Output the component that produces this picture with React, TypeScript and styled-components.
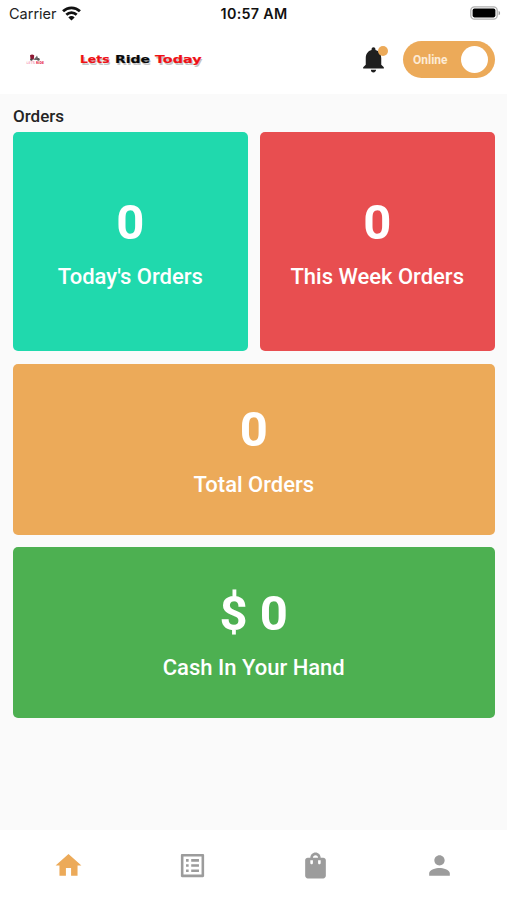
import React from "react";
import styled, { createGlobalStyle } from "styled-components";
import { MdHome, MdListAlt, MdNotifications, MdPerson, MdShoppingBag } from "react-icons/md";

const GlobalStyle = createGlobalStyle`
  * { box-sizing: border-box; }
  body { margin: 0; background: #fafafa; font-family: Roboto, sans-serif; }
`;

const Screen = styled.div`
  width: 507px;
  height: 900px;
  display: flex;
  flex-direction: column;
  background: #fafafa;
  overflow: hidden;
`;

const StatusBar = styled.div`
  height: 27px;
  flex: none;
  display: grid;
  grid-template-columns: 1fr auto 1fr;
  align-items: center;
  padding: 0 8px 0 9px;
  background: #fff;
  color: #111;
  font-family: Inter, sans-serif;
  font-size: 14.5px;
  line-height: 27px;
`;

const Carrier = styled.div`
  display: flex;
  align-items: center;
  gap: 5px;
  color: #222;
`;

const Clock = styled.div`
  font-weight: 600;
  font-size: 14.3px;
  letter-spacing: 0.3px;
`;

const BatterySlot = styled.div`
  display: flex;
  justify-content: flex-end;
  margin-right: -2px;
  padding-bottom: 1px;
`;

const Header = styled.header`
  height: 67px;
  flex: none;
  display: flex;
  align-items: center;
  padding: 0 12px 2px 26px;
  background: #fff;
`;

const Wordmark = styled.svg`
  margin-left: 33px;
`;

const Bell = styled.div`
  position: relative;
  display: flex;
  margin-left: auto;
  margin-right: 14px;
  color: #1f1f1f;
`;

const BellDot = styled.span`
  position: absolute;
  top: 1.5px;
  right: 1.5px;
  width: 10px;
  height: 10px;
  border-radius: 50%;
  background: #ecaa59;
`;

const Toggle = styled.button`
  display: flex;
  align-items: center;
  justify-content: space-between;
  width: 92px;
  height: 37px;
  padding: 0 7px 0 10px;
  border: 0;
  border-radius: 19px;
  background: #ecaa59;
  color: #fdebd5;
  font: 700 12px Roboto, sans-serif;
`;

const Knob = styled.span`
  width: 27px;
  height: 27px;
  border-radius: 50%;
  background: #fff;
`;

const Content = styled.main`
  flex: 1;
  padding: 12px 12.5px 0 13px;
`;

const Title = styled.h1`
  margin: 0 0 5.5px;
  font-size: 17px;
  line-height: 20px;
  font-weight: 500;
  color: #242424;
`;

const Cards = styled.div`
  display: grid;
  grid-template-columns: 1fr 1fr;
  grid-template-rows: 219.8px 171px 171px;
  gap: 12.3px;
`;

const Card = styled.section<{ $color: string; $wide?: boolean }>`
  grid-column: ${(p) => (p.$wide ? "1 / -1" : "auto")};
  display: flex;
  flex-direction: column;
  align-items: center;
  justify-content: center;
  padding-top: 1.2px;
  border-radius: 5px;
  background: ${(p) => p.$color};
  color: #fff;
`;

const Value = styled.div`
  font-size: 49px;
  line-height: 58px;
  font-weight: 700;
`;

const Label = styled.div`
  margin-top: 12.4px;
  font-size: 22px;
  line-height: 26px;
  font-weight: 500;
  white-space: nowrap;
`;

const Nav = styled.nav`
  height: 70px;
  flex: none;
  display: grid;
  grid-template-columns: repeat(4, 1fr);
  padding: 0 6px 0 7px;
  background: #fff;
`;

const Tab = styled.div<{ $active?: boolean }>`
  display: flex;
  align-items: center;
  justify-content: center;
  color: ${(p) => (p.$active ? "#ecaa59" : "#9c9c9c")};
`;

const cards = [
  { value: "0", label: "Today's Orders", color: "#20d9ad" },
  { value: "0", label: "This Week Orders", color: "#e84e50" },
  { value: "0", label: "Total Orders", color: "#ecaa59", wide: true },
  { value: "$ 0", label: "Cash In Your Hand", color: "#4db051", wide: true },
];

const tabs = [MdHome, MdListAlt, MdShoppingBag, MdPerson];

const Wifi = () => (
  <svg width="19" height="15" viewBox="0 0 18 14" fill="none" stroke="#111" strokeWidth="2.6">
    <path d="M1 4.9a11.5 11.5 0 0 1 16 0" />
    <path d="M4.1 8.2a7 7 0 0 1 9.8 0" />
    <path d="M9 13.6 6 10.7a4.3 4.3 0 0 1 6 0z" fill="#111" stroke="none" />
  </svg>
);

const Battery = () => (
  <svg width="31" height="14" viewBox="0 0 31 14">
    <rect x="0.8" y="0.8" width="26.4" height="12.4" rx="3.6" fill="#fff" stroke="#b0b0b0" strokeWidth="1.3" />
    <rect x="2.6" y="2.6" width="22.8" height="8.8" rx="1.8" fill="#000" />
    <path d="M28.6 4.7a2.5 2.5 0 0 1 0 4.6z" fill="#999" />
  </svg>
);

const ScooterLogo = () => (
  <svg width="20" height="14" viewBox="0 0 20 14">
    <path d="M4 2.2Q6 0.6 8.2 2.2L7.8 6.4H4.6z" fill="#8d1732" />
    <path d="M7.5 6.5 10 4l1-1.6 1 2.8 1.5 1.8H9z" fill="#686868" />
    <circle cx="5.4" cy="6.6" r="1.2" fill="#444" />
    <circle cx="12.4" cy="6.4" r="1.3" fill="#555" />
    <text x="0.5" y="11" fontFamily="DejaVu Sans" fontSize="3.6" fill="#f0608c" textLength="8.5" lengthAdjust="spacingAndGlyphs">LETS</text>
    <text x="10" y="11" fontFamily="DejaVu Sans" fontWeight="700" fontSize="3.8" fill="#e5203c" textLength="8" lengthAdjust="spacingAndGlyphs">RIDE</text>
  </svg>
);

const words = [
  { text: "Lets", x: 1, width: 29.5, color: "#ee1016" },
  { text: "Ride", x: 36, width: 35, color: "#080808" },
  { text: "Today", x: 76, width: 46.5, color: "#ee1016" },
];

const WordmarkLogo = () => (
  <Wordmark width="126" height="18" viewBox="0 0 126 18" fontFamily="DejaVu Sans" fontWeight="700" fontSize="11">
    {words.map((w) => (
      <g key={w.text}>
        <text x={w.x + 1.2} y="13.8" fill="#c4c4c4" textLength={w.width} lengthAdjust="spacingAndGlyphs" aria-hidden="true">{w.text}</text>
        <text x={w.x} y="12.2" fill={w.color} stroke={w.color} strokeWidth="0.2" textLength={w.width} lengthAdjust="spacingAndGlyphs">{w.text}</text>
      </g>
    ))}
  </Wordmark>
);

export default function App() {
  return (
    <Screen>
      <GlobalStyle />
      <StatusBar>
        <Carrier>Carrier <Wifi /></Carrier>
        <Clock>10:57 AM</Clock>
        <BatterySlot><Battery /></BatterySlot>
      </StatusBar>
      <Header>
        <ScooterLogo />
        <WordmarkLogo />
        <Bell>
          <MdNotifications size={31} />
          <BellDot />
        </Bell>
        <Toggle>Online<Knob /></Toggle>
      </Header>
      <Content>
        <Title>Orders</Title>
        <Cards>
          {cards.map((c) => (
            <Card key={c.label} $color={c.color} $wide={c.wide}>
              <Value>{c.value}</Value>
              <Label>{c.label}</Label>
            </Card>
          ))}
        </Cards>
      </Content>
      <Nav>
        {tabs.map((Icon, i) => (
          <Tab key={i} $active={i === 0}><Icon size={31} /></Tab>
        ))}
      </Nav>
    </Screen>
  );
}
